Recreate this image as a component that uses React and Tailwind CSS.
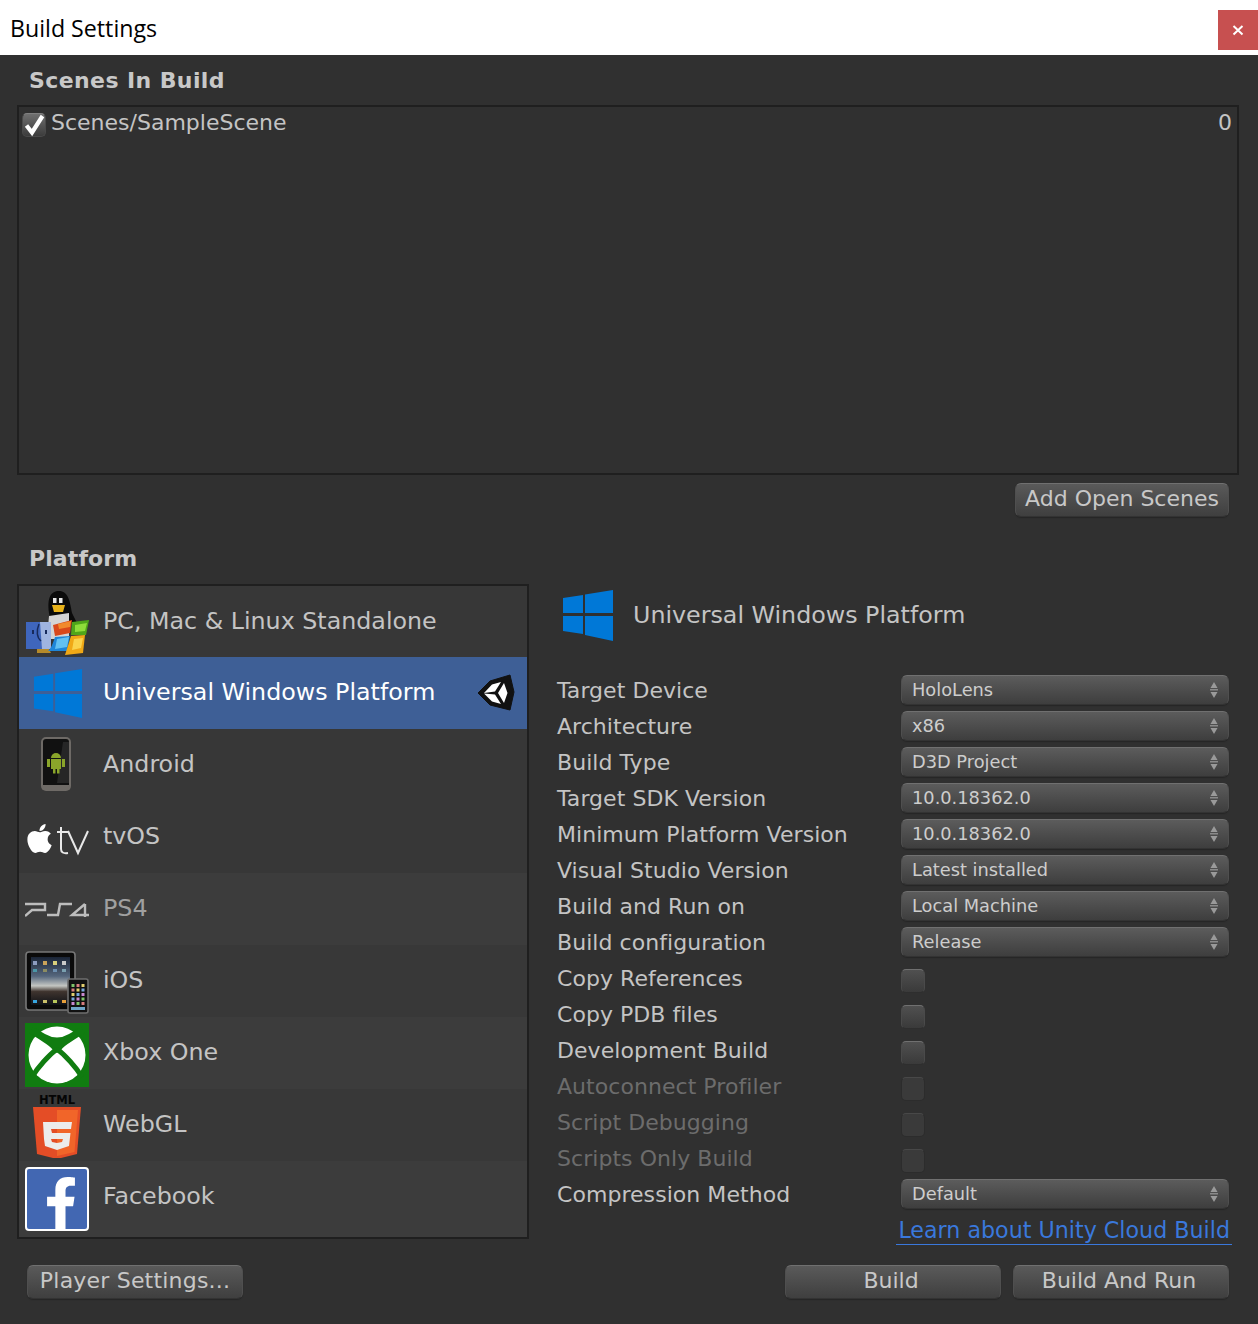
import React from 'react';
import { FaApple, FaFacebookF } from 'react-icons/fa';

const ui = "font-['DejaVu_Sans',sans-serif]";

function WinLogo({ size = 52 }) {
  return (
    <svg width={size} height={size} viewBox="0 0 52 52" className="block">
      <polygon points="1,9 21,6 21,24 1,24" fill="#0078d7" />
      <polygon points="23,5.5 51,1 51,24 23,24" fill="#0078d7" />
      <polygon points="1,27 21,27 21,45 1,42" fill="#0078d7" />
      <polygon points="23,27 51,27 51,52 23,46" fill="#0078d7" />
    </svg>
  );
}

function StandaloneIcon() {
  return (
    <svg width="66" height="66" viewBox="0 0 66 66" className="block">
      <path d="M24 24 C22 8 26 2 34 2 C43 2 45 12 47 24 L52 34 L26 36 Z" fill="#0b0b0b" />
      <rect x="28" y="9" width="3.5" height="5" fill="#e8e8e8" />
      <rect x="34" y="9" width="3.5" height="5" fill="#e8e8e8" />
      <path d="M27 16 L40 16 L38 23 L29 23 Z" fill="#e8b21a" />
      <path d="M24 27 L44 24 L44 50 L22 50 Z" fill="#d4d4d4" />
      <rect x="1" y="33" width="25" height="27" fill="#3f66bd" />
      <path d="M15 33 L26 33 L26 60 L17 60 Z" fill="#9fb4e0" />
      <path d="M14 35 C11 42 12 49 16 52" stroke="#172a5c" strokeWidth="1.5" fill="none" />
      <rect x="7" y="41" width="2" height="4" fill="#172a5c" />
      <rect x="20" y="41" width="2" height="4" fill="#172a5c" />
      <path d="M12 60 L24 60 L26 64 L12 64 Z" fill="#b58a2a" />
      <path d="M28 36 L47 31 L45 44 L30 47 Z" fill="#d9481a" />
      <path d="M33 35 L46 32 L45 38 L34 40 Z" fill="#f18a2c" />
      <path d="M47 33 L64 31 L61 46 L46 46 Z" fill="#4fa519" />
      <path d="M50 36 L62 34 L60 42 L50 43 Z" fill="#8fdc3a" />
      <path d="M30 48 C28 54 26 60 23 62 L42 62 L45 47 Z" fill="#1f86d8" />
      <path d="M32 50 L44 48 L42 58 L30 60 Z" fill="#63c1f2" />
      <path d="M46 47 L60 46 L58 64 L40 66 Z" fill="#f0a816" />
      <path d="M49 50 L58 49 L56 59 L47 61 Z" fill="#fbd34c" />
    </svg>
  );
}

function AndroidIcon() {
  return (
    <svg width="66" height="66" viewBox="0 0 66 66" className="block">
      <rect x="17" y="6" width="28" height="52" rx="4" fill="#111" stroke="#6e6a66" strokeWidth="2" />
      <path d="M17 53 L45 53 L45 56 Q45 58 43 58 L19 58 Q17 58 17 56 Z" fill="#6e6a66" />
      <path d="M38 10 L44 10 L44 51 L32 51 Z" fill="#262626" />
      <path d="M26 26 A5 5 0 0 1 36 26 Z" fill="#8aa52a" />
      <rect x="26" y="27" width="10" height="10" fill="#8aa52a" />
      <rect x="22" y="27" width="3" height="8" fill="#8aa52a" />
      <rect x="37" y="27" width="3" height="8" fill="#8aa52a" />
      <rect x="28" y="37" width="2.5" height="4.5" fill="#8aa52a" />
      <rect x="32" y="37" width="2.5" height="4.5" fill="#8aa52a" />
    </svg>
  );
}

function TvIcon() {
  return (
    <div className="relative w-[66px] h-[66px]">
      <FaApple className="absolute -left-[2px] top-[18px] text-white" size={33} />
      <svg width="66" height="66" viewBox="0 0 66 66" className="absolute left-0 top-0">
        <path d="M36 23 L36 45 Q36 50 43 49" stroke="#e8e8e8" strokeWidth="2" fill="none" />
        <path d="M32 28 L43 28" stroke="#e8e8e8" strokeWidth="2" fill="none" />
        <path d="M43 27 L53 49 L63 27" stroke="#e8e8e8" strokeWidth="2" fill="none" />
      </svg>
    </div>
  );
}

function Ps4Icon() {
  return (
    <svg width="66" height="66" viewBox="0 0 66 66" className="block">
      <g fill="none" stroke="#bdbdbd" strokeWidth="2.4">
        <path d="M0 28 L20 28 L20 34 L7 34 L0 40" />
        <path d="M47 28 L35 28 L33 39 L22 39" />
        <path d="M60 28 L47 39 L64 39" />
        <path d="M60 28 L60 41" />
      </g>
    </svg>
  );
}

function IosIcon() {
  return (
    <svg width="66" height="66" viewBox="0 0 66 66" className="block">
      <defs>
        <linearGradient id="scr" x1="0" y1="0" x2="0" y2="1">
          <stop offset="0" stopColor="#1a2436" />
          <stop offset="0.4" stopColor="#55667d" />
          <stop offset="0.6" stopColor="#c4c6c2" />
          <stop offset="0.72" stopColor="#3f342e" />
          <stop offset="1" stopColor="#101318" />
        </linearGradient>
      </defs>
      <rect x="1" y="4" width="49" height="58" rx="3" fill="#0a0a0a" stroke="#777" strokeWidth="1.6" />
      <rect x="6" y="9" width="39" height="48" fill="url(#scr)" />
      {[8, 18, 28, 37].map((x, i) => (
        <g key={x}>
          <rect x={x} y="13" width="4" height="4" fill={['#8c9cc0', '#c9a25a', '#d9cf7c', '#c9c9c9'][i]} />
          <rect x={x} y="21" width="4" height="3" fill={['#4b97a8', '#8c8c62', '#6d8fb0', '#7aa0b0'][i]} />
          <rect x={x} y="52" width="4" height="3" fill={['#37a6df', '#c9c06a', '#b7c65a', '#e8a03a'][i]} />
        </g>
      ))}
      <rect x="43" y="31" width="20" height="34" rx="2" fill="#111" stroke="#6d6d6d" strokeWidth="1.6" />
      {[0, 1, 2, 3, 4].map((r) =>
        [0, 1, 2].map((c) => (
          <rect key={`${r}-${c}`} x={46.5 + c * 5} y={36 + r * 4.5} width="3" height="3"
            fill={['#7ec46a', '#d77f7f', '#e3d070', '#79a8dc', '#c98ad0'][(r + c) % 5]} />
        ))
      )}
      <rect x="46" y="59" width="14" height="3" fill="#6fa6c9" />
    </svg>
  );
}

function XboxIcon() {
  return (
    <svg width="64" height="64" viewBox="0 0 64 64" className="block mt-[3px]">
      <rect width="64" height="64" fill="#107c10" />
      <circle cx="32" cy="32" r="28.5" fill="#fff" />
      <path d="M8 4 L20 11 Q32 18 44 11 L56 4 L60 10 C50 16 40 22 36 27 L32 30 L28 27 C24 22 14 16 4 10 Z" fill="#107c10" />
      <g fill="none" stroke="#107c10" strokeWidth="5">
        <path d="M32 26 C24 32 13 44 7 54" />
        <path d="M32 26 C40 32 51 44 57 54" />
      </g>
    </svg>
  );
}

function Html5Icon() {
  return (
    <svg width="66" height="66" viewBox="0 0 66 66" className="block">
      <text x="32" y="12" textAnchor="middle" fontFamily="'DejaVu Sans',sans-serif" fontWeight="700" fontSize="11.5" fill="#050505">HTML</text>
      <polygon points="8,15 56,15 52,62 32,67 12,62" fill="#e44d26" />
      <polygon points="32,18 53,18 49.5,60 32,64" fill="#f16529" />
      <polygon points="18,30 47,30 46,37 26,37 27,41 45.5,41 44,54 32,58 20,54 19,47 26,47 27,50 32,51 37,50 38,47 19,47" fill="#ececec" />
    </svg>
  );
}

function FacebookIcon() {
  return (
    <div className="mt-[3px] w-16 h-16 bg-[#4267b2] border-2 border-white rounded-[4px] flex items-end justify-center overflow-hidden">
      <FaFacebookF className="text-white ml-2" size={52} />
    </div>
  );
}

function UnityIcon() {
  return (
    <svg width="38" height="38" viewBox="0 0 38 38" className="block">
      <path d="M1 19 L13 7 L33 1 L37 18 L33 36 L13 31 Z" fill="#111" stroke="#111" strokeWidth="1" strokeLinejoin="round" />
      <path d="M7 19 L15 10.5 L24 8 L18 17.5 Z M18 20.5 L24 30 L15 27.5 L7 19.5 Z M21 19 L27 9 L30.5 19 L27 29 Z" fill="#fff" />
    </svg>
  );
}

const platforms = [
  { name: 'PC, Mac & Linux Standalone', icon: <StandaloneIcon />, bg: 'bg-[#373737]', h: 'h-[71px]' },
  { name: 'Universal Windows Platform', icon: <div className="pl-[8px] pt-[8px]"><WinLogo size={50} /></div>, bg: 'bg-[#3e5f96]', active: true },
  { name: 'Android', icon: <AndroidIcon />, bg: 'bg-[#373737]' },
  { name: 'tvOS', icon: <TvIcon />, bg: 'bg-[#373737]' },
  { name: 'PS4', icon: <Ps4Icon />, bg: 'bg-[#3c3c3c]', text: 'text-[#a0a0a0]' },
  { name: 'iOS', icon: <IosIcon />, bg: 'bg-[#383838]' },
  { name: 'Xbox One', icon: <XboxIcon />, bg: 'bg-[#3c3c3c]' },
  { name: 'WebGL', icon: <Html5Icon />, bg: 'bg-[#383838]' },
  { name: 'Facebook', icon: <FacebookIcon />, bg: 'bg-[#3c3c3c]' },
];

function PlatformRow({ p }) {
  return (
    <div className={`${p.h || 'h-[72px]'} ${p.bg} flex items-center pl-[6px]`}>
      <div className="w-[66px] h-[66px] shrink-0">{p.icon}</div>
      <span className={`ml-[12px] text-[23.75px] leading-none ${p.active ? 'text-white' : p.text || 'text-[#c4c4c4]'}`}>
        {p.name}
      </span>
      {p.active && (
        <div className="ml-auto mr-[12px]">
          <UnityIcon />
        </div>
      )}
    </div>
  );
}

function Btn({ children, className = '' }) {
  return (
    <button className={`h-[34px] pb-[3px] rounded-[6px] border border-[#4f4f4f] border-t-[#707070] border-b-[#333333] bg-gradient-to-b from-[#5a5a5a] to-[#3f3f3f] text-[#c8c8c8] text-[22px] leading-none shadow-[0_1px_1px_#262626] ${ui} ${className}`}>
      {children}
    </button>
  );
}

function Select({ value }) {
  return (
    <div className="h-[30px] w-[328px] rounded-[6px] border border-[#4f4f4f] border-t-[#707070] border-b-[#333333] bg-gradient-to-b from-[#5c5c5c] to-[#3e3e3e] shadow-[0_1px_1px_#262626] flex items-center justify-between pl-[10px] pr-[9px] text-[17.8px] leading-none text-[#cdcdcd]">
      <span>{value}</span>
      <svg width="10" height="18" viewBox="0 0 10 18" className="block">
        <polygon points="5,1 8.5,7 1.5,7" fill="#9a9a9a" />
        <rect x="1" y="8" width="8" height="1.5" fill="#8a8a8a" />
        <polygon points="1.5,11 8.5,11 5,17" fill="#9a9a9a" />
      </svg>
    </div>
  );
}

function Check({ disabled }) {
  return (
    <div className={`mt-[6px] w-[24px] h-[24px] rounded-[5px] border ${disabled ? 'border-[#2c2c2c] border-t-[#484848] bg-[#3a3a3a]' : 'border-[#4a4a4a] border-t-[#707070] border-b-[#2e2e2e] bg-gradient-to-b from-[#505050] to-[#3a3a3a]'}`} />
  );
}

const settings = [
  ['Target Device', 'HoloLens'],
  ['Architecture', 'x86'],
  ['Build Type', 'D3D Project'],
  ['Target SDK Version', '10.0.18362.0'],
  ['Minimum Platform Version', '10.0.18362.0'],
  ['Visual Studio Version', 'Latest installed'],
  ['Build and Run on', 'Local Machine'],
  ['Build configuration', 'Release'],
  ['Copy References', null],
  ['Copy PDB files', null],
  ['Development Build', null],
  ['Autoconnect Profiler', null, true],
  ['Script Debugging', null, true],
  ['Scripts Only Build', null, true],
  ['Compression Method', 'Default'],
];

export default function App() {
  return (
    <div className={`w-[1258px] h-[1324px] bg-[#303030] overflow-hidden ${ui}`}>
      <div className="h-[55px] bg-white flex items-start justify-between">
        <span className="ml-[10px] mt-[10px] text-[23.2px] leading-[36px] text-black font-['Open_Sans',sans-serif]">Build Settings</span>
        <button className="mt-[10px] w-[40px] h-[40px] bg-[#c75050] flex items-center justify-center">
          <svg width="12" height="12" viewBox="0 0 12 12"><path d="M1.5 2 L10.5 10.5 M10.5 2 L1.5 10.5" stroke="#fff" strokeWidth="2" /></svg>
        </button>
      </div>

      <div className="pl-[17px] pr-[19px]">
        <div className="h-[50px] pl-[12px] pt-[13px] text-[22px] leading-[26px] font-bold text-[#c8c8c8] tracking-[0.4px]">Scenes In Build</div>
        <div className="h-[370px] border-2 border-[#1f1f1f] flex items-start justify-between pl-[3px] pr-[5px] pt-[1px]">
          <div className="flex items-center gap-[5px]">
            <div className="w-[24px] h-[24px] mt-[4px] rounded-[5px] border border-[#4a4a4a] border-t-[#808080] bg-gradient-to-b from-[#707070] to-[#3c3c3c] flex items-center justify-center">
              <svg width="24" height="24" viewBox="0 0 24 24" className="shrink-0"><path d="M4.5 12.5 L10 19.5 L20.5 3" stroke="#fff" strokeWidth="4.2" fill="none" /></svg>
            </div>
            <span className="text-[22px] leading-[30px] text-[#c4c4c4]">Scenes/SampleScene</span>
          </div>
          <span className="text-[22px] leading-[30px] text-[#c4c4c4]">0</span>
        </div>
        <div className="flex justify-end mt-[8px] pr-[10px]">
          <Btn className="w-[214px]">Add Open Scenes</Btn>
        </div>
        <div className="h-[67px] pl-[12px] pt-[29px] text-[22px] leading-[26px] font-bold text-[#c8c8c8] tracking-[0.1px]">Platform</div>

        <div className="flex items-start">
          <div className="w-[512px] h-[655px] border-2 border-[#1f1f1f] bg-[#3c3c3c] shrink-0">
            {platforms.map((p) => <PlatformRow key={p.name} p={p} />)}
          </div>
          <div className="ml-[28px] flex-1">
            <div className="h-[88px] flex items-start pt-[5px] pl-[5px]">
              <WinLogo size={52} />
              <span className="ml-[19px] mt-[11px] text-[23.75px] leading-[30px] text-[#c4c4c4]">Universal Windows Platform</span>
            </div>
            {settings.map(([label, value, disabled]) => (
              <div key={label} className="h-[36px] flex items-center">
                <span className={`w-[344px] pt-[2px] text-[22px] leading-none tracking-[0.05px] ${disabled ? 'text-[#6c6c6c]' : 'text-[#c4c4c4]'}`}>{label}</span>
                {value ? <Select value={value} /> : <Check disabled={disabled} />}
              </div>
            ))}
            <div className="flex justify-end pr-[7px]">
              <a className="block pl-[2px] pr-[2px] pt-[3px] h-[33px] border-b border-[#3a78dc] text-[22.2px] leading-[30px] text-[#3a78dc]">Learn about Unity Cloud Build</a>
            </div>
          </div>
        </div>

        <div className="flex justify-between mt-[20px] pl-[10px] pr-[10px]">
          <Btn className="w-[216px] tracking-[0.2px]">Player Settings...</Btn>
          <div className="flex gap-[12px]">
            <Btn className="w-[216px] pr-[4px]">Build</Btn>
            <Btn className="w-[216px] pr-[4px]">Build And Run</Btn>
          </div>
        </div>
      </div>
    </div>
  );
}
